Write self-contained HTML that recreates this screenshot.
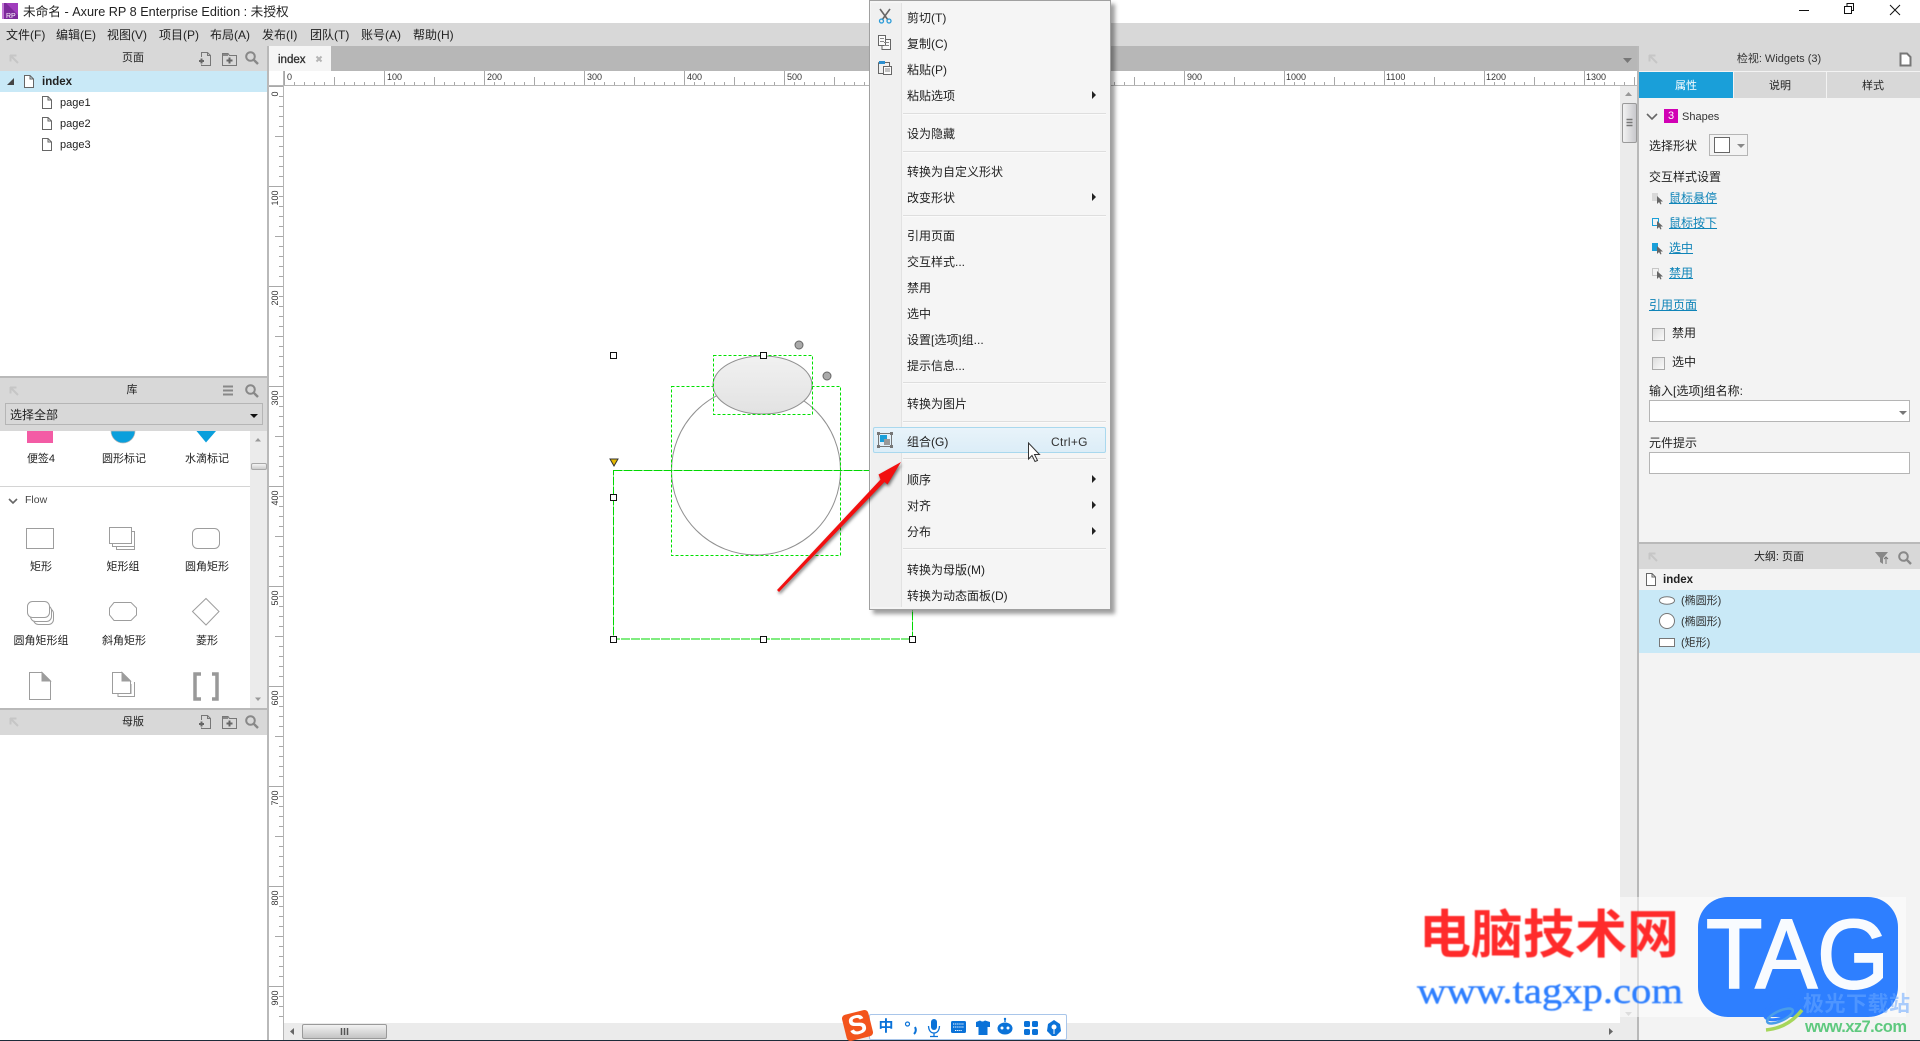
<!DOCTYPE html>
<html lang="zh-CN">
<head>
<meta charset="utf-8">
<title>未命名 - Axure RP 8 Enterprise Edition : 未授权</title>
<style>
html,body{margin:0;padding:0;width:1920px;height:1041px;overflow:hidden;background:#fff}
body{position:relative;font-family:"Liberation Sans","Noto Sans CJK SC",sans-serif;font-size:12px;color:#222}
.b{position:absolute}
.t{position:absolute;white-space:nowrap;line-height:16px;height:16px}
.c{transform:translateX(-50%)}
.m{font-size:11px}
.l{color:#0f84b8;text-decoration:underline}
svg{position:absolute;left:0;top:0;overflow:visible}
.sep{position:absolute;left:33px;width:203px;height:1px;background:#dedede;border-bottom:1px solid #fafafa}
.menu .t{left:37px}
.ar{position:absolute;left:222px;width:0;height:0;border-left:4px solid #222;border-top:4px solid transparent;border-bottom:4px solid transparent}
</style>
</head>
<body>

<!-- base panels -->
<div class="b" style="left:0;top:23px;width:1920px;height:23px;background:#d8d8d8"></div>
<div class="b" style="left:0;top:46px;width:267px;height:25px;background:#d8d8d8"></div>
<div class="b" style="left:0;top:71px;width:267px;height:21px;background:#c9e9f7"></div>
<div class="b" style="left:267px;top:46px;width:2px;height:994px;background:#b9b9b9"></div>
<div class="b" style="left:0;top:376px;width:267px;height:2px;background:#b9b9b9"></div>
<div class="b" style="left:0;top:378px;width:267px;height:53px;background:#d8d8d8"></div>
<div class="b" style="left:5px;top:403px;width:256px;height:20px;border:1px solid #b5b5b5"></div>
<div class="b" style="left:250px;top:431px;width:17px;height:277px;background:#ebebeb"></div>
<div class="b" style="left:0;top:486px;width:250px;height:1px;background:#d4d4d4"></div>
<div class="b" style="left:251px;top:463px;width:14px;height:5px;border:1px solid #a8a8a8;border-radius:2px;background:linear-gradient(#f4f4f4,#ccc)"></div>
<div class="b" style="left:0;top:708px;width:267px;height:2px;background:#b9b9b9"></div>
<div class="b" style="left:0;top:710px;width:267px;height:25px;background:#d8d8d8"></div>

<!-- tab bar -->
<div class="b" style="left:269px;top:46px;width:1369px;height:25px;background:#b7b7b7"></div>
<div class="b" style="left:269px;top:46px;width:62px;height:25px;background:#f5f5f5"></div>

<!-- right panel -->
<div class="b" style="left:1637px;top:46px;width:2px;height:994px;background:#b9b9b9"></div>
<div class="b" style="left:1639px;top:46px;width:281px;height:994px;background:#f3f3f3"></div>
<div class="b" style="left:1639px;top:46px;width:281px;height:25px;background:#d8d8d8"></div>
<div class="b" style="left:1639px;top:72px;width:94px;height:26px;background:#1a9fd9"></div>
<div class="b" style="left:1734px;top:72px;width:92px;height:26px;background:#d8d8d8"></div>
<div class="b" style="left:1827px;top:72px;width:93px;height:26px;background:#d8d8d8"></div>
<div class="b" style="left:1709px;top:134px;width:37px;height:20px;border:1px solid #b5b5b5;background:#f3f3f3"></div>
<div class="b" style="left:1714px;top:137px;width:14px;height:14px;border:1px solid #666;background:#fff"></div>
<div class="b" style="left:1652px;top:328px;width:11px;height:11px;border:1px solid #aaa;background:linear-gradient(135deg,#ddd,#fafafa)"></div>
<div class="b" style="left:1652px;top:357px;width:11px;height:11px;border:1px solid #aaa;background:linear-gradient(135deg,#ddd,#fafafa)"></div>
<div class="b" style="left:1649px;top:400px;width:259px;height:20px;border:1px solid #b5b5b5;background:#fff"></div>
<div class="b" style="left:1649px;top:452px;width:259px;height:20px;border:1px solid #b5b5b5;background:#fff"></div>
<div class="b" style="left:1639px;top:542px;width:281px;height:2px;background:#b9b9b9"></div>
<div class="b" style="left:1639px;top:544px;width:281px;height:25px;background:#d8d8d8"></div>
<div class="b" style="left:1639px;top:590px;width:281px;height:63px;background:#c9e9f7"></div>

<!-- scrollbars -->
<div class="b" style="left:1620px;top:86px;width:17px;height:954px;background:#ebebeb"></div>
<div class="b" style="left:1622px;top:103px;width:13px;height:38px;border:1px solid #9a9a9a;border-radius:2px;background:linear-gradient(90deg,#f2f2f2,#c8c8cc)"></div>
<div class="b" style="left:284px;top:1023px;width:1336px;height:17px;background:#ebebeb"></div>
<div class="b" style="left:302px;top:1024px;width:83px;height:13px;border:1px solid #9a9a9a;border-radius:2px;background:linear-gradient(#f2f2f2,#c4c4c4)"></div>
<div class="b" style="left:0;top:1040px;width:1920px;height:1px;background:#1d2c3a"></div>

<!-- graphics -->
<svg width="1920" height="1041" viewBox="0 0 1920 1041">
<defs>
<pattern id="rt" patternUnits="userSpaceOnUse" x="284" y="71" width="100" height="14">
<g fill="#a8a8a8"><rect x="0" y="0" width="1" height="14"/><rect x="50" y="6" width="1" height="8"/>
<rect x="10" y="11" width="1" height="3"/><rect x="20" y="11" width="1" height="3"/><rect x="30" y="11" width="1" height="3"/><rect x="40" y="11" width="1" height="3"/><rect x="60" y="11" width="1" height="3"/><rect x="70" y="11" width="1" height="3"/><rect x="80" y="11" width="1" height="3"/><rect x="90" y="11" width="1" height="3"/></g>
</pattern>
<pattern id="rl" patternUnits="userSpaceOnUse" x="269" y="86" width="14" height="100">
<g fill="#a8a8a8"><rect x="0" y="0" width="14" height="1"/><rect x="6" y="50" width="8" height="1"/>
<rect x="10" y="10" width="4" height="1"/><rect x="10" y="20" width="4" height="1"/><rect x="10" y="30" width="4" height="1"/><rect x="10" y="40" width="4" height="1"/><rect x="10" y="60" width="4" height="1"/><rect x="10" y="70" width="4" height="1"/><rect x="10" y="80" width="4" height="1"/><rect x="10" y="90" width="4" height="1"/></g>
</pattern>
<linearGradient id="eg" x1="0" y1="0" x2="0" y2="1"><stop offset="0" stop-color="#f1f1f1"/><stop offset="1" stop-color="#e2e2e2"/></linearGradient>
<symbol id="pin" width="10" height="10" viewBox="0 0 10 10"><path d="M1 1.5H7.5M1.5 1V7.5M2 2L9 9" fill="none" stroke="#c6c6c6" stroke-width="2"/></symbol>
<symbol id="np" width="14" height="14" viewBox="0 0 14 14"><path d="M3.5 5V.5H9.5L12.5 3.5V13.5H3.5V12.5M9.5.5V3.5H12.5" fill="none" stroke="#777"/><path d="M3.5 6.5V11.5M1 9H6" stroke="#666" stroke-width="2"/></symbol>
<symbol id="nf" width="15" height="14" viewBox="0 0 15 14"><path d="M.5 1.5H6L7.5 3.5H14.5V13.5H.5Z" fill="none" stroke="#777"/><rect x="1" y="2" width="5" height="2" fill="#888"/><path d="M7.5 5.5V11.5M4.5 8.5H10.5" stroke="#666" stroke-width="2"/></symbol>
<symbol id="sr" width="14" height="14" viewBox="0 0 14 14"><circle cx="5.5" cy="5.5" r="4.3" fill="none" stroke="#888" stroke-width="2"/><path d="M8.8 8.8L13 13" stroke="#888" stroke-width="2.4"/></symbol>
<symbol id="pg" width="10" height="13" viewBox="0 0 10 13"><path d="M.5.5H6L9.5 4V12.5H.5ZM6 .5V4H9.5" fill="#fff" stroke="#666"/></symbol>
<symbol id="cur" width="12" height="12" viewBox="0 0 12 12"><path d="M5 3L5 11L7 9L8.5 11.5L9.5 11L8.5 8.5L11 8.5Z" fill="#666"/></symbol>
</defs>

<!-- rulers -->
<rect x="269" y="71" width="1368" height="14" fill="#fff"/>
<rect x="284" y="71" width="1353" height="14" fill="url(#rt)"/>
<rect x="269" y="85" width="1368" height="1" fill="#b5b5b5"/>
<rect x="269" y="86" width="14" height="937" fill="url(#rl)"/>
<rect x="283" y="71" width="1" height="969" fill="#b5b5b5"/>
<g font-size="9" fill="#333" font-family="Liberation Sans,sans-serif">
<text x="287" y="80">0</text><text x="387" y="80">100</text><text x="487" y="80">200</text><text x="587" y="80">300</text><text x="687" y="80">400</text><text x="787" y="80">500</text><text x="1187" y="80">900</text><text x="1286" y="80">1000</text><text x="1386" y="80">1100</text><text x="1486" y="80">1200</text><text x="1586" y="80">1300</text>
<g text-anchor="middle">
<text transform="translate(278 94) rotate(-90)">0</text>
<text transform="translate(278 198) rotate(-90)">100</text>
<text transform="translate(278 298) rotate(-90)">200</text>
<text transform="translate(278 398) rotate(-90)">300</text>
<text transform="translate(278 498) rotate(-90)">400</text>
<text transform="translate(278 598) rotate(-90)">500</text>
<text transform="translate(278 698) rotate(-90)">600</text>
<text transform="translate(278 798) rotate(-90)">700</text>
<text transform="translate(278 898) rotate(-90)">800</text>
<text transform="translate(278 998) rotate(-90)">900</text>
</g>
</g>

<!-- canvas shapes -->
<circle cx="756" cy="470.5" r="84.5" fill="#fff" stroke="#909090" stroke-width="1"/>
<rect x="613.5" y="470.5" width="299" height="168.5" fill="none" stroke="#00d800" stroke-width="1" stroke-dasharray="9 1"/>
<rect x="671.5" y="386.5" width="169" height="169" fill="none" stroke="#00e000" stroke-width="1" stroke-dasharray="3 2"/>
<ellipse cx="762.5" cy="385" rx="49.5" ry="29" fill="url(#eg)" stroke="#909090" stroke-width="1"/>
<rect x="713.5" y="355.5" width="99" height="59" fill="none" stroke="#00e000" stroke-width="1" stroke-dasharray="3 2"/>
<circle cx="799" cy="345" r="4" fill="#aaa" stroke="#666"/>
<circle cx="827" cy="376" r="4" fill="#aaa" stroke="#666"/>
<path d="M610 459H618L614 466Z" fill="#e5b800" stroke="#333" stroke-width="1"/>
<g fill="#fff" stroke="#111" stroke-width="1">
<rect x="610.5" y="352.5" width="6" height="6"/><rect x="760.5" y="352.5" width="6" height="6"/>
<rect x="610.5" y="494.5" width="6" height="6"/><rect x="610.5" y="636.5" width="6" height="6"/>
<rect x="760.5" y="636.5" width="6" height="6"/><rect x="909.5" y="636.5" width="6" height="6"/>
</g>

<!-- panel icons -->
<use href="#pin" x="9" y="54"/><use href="#np" x="198" y="52"/><use href="#nf" x="222" y="52"/><use href="#sr" x="245" y="51"/>
<use href="#pin" x="9" y="386"/><use href="#sr" x="245" y="384"/>
<path d="M223 386.5H233M223 390.5H233M223 394.5H233" stroke="#888" stroke-width="2"/>
<path d="M250 414H258L254 418Z" fill="#111"/>
<use href="#pin" x="9" y="717"/><use href="#np" x="198" y="715"/><use href="#nf" x="222" y="715"/><use href="#sr" x="245" y="715"/>
<path d="M14 78V85H7Z" fill="#444"/>
<use href="#pg" x="24" y="75"/><use href="#pg" x="42" y="96"/><use href="#pg" x="42" y="117"/><use href="#pg" x="42" y="138"/>
<path d="M316.5 56.5L321.5 61.5M321.5 56.5L316.5 61.5" stroke="#b5b5b5" stroke-width="2"/>
<path d="M1623 58H1632L1627.5 63Z" fill="#777"/>

<!-- scrollbar arrows -->
<path d="M255 441.5L258 438L261 441.5Z" fill="#999"/>
<path d="M255 697.5L258 701L261 697.5Z" fill="#999"/>
<path d="M1625 96L1628.5 92L1632 96Z" fill="#999"/>
<path d="M1625 1012L1628.5 1016L1632 1012Z" fill="#bbb"/>
<path d="M1609 1028V1035L1613 1031.5Z" fill="#666"/>
<path d="M294 1028V1035L290 1031.5Z" fill="#666"/>
<path d="M1626.5 119.5H1632.5M1626.5 122.5H1632.5M1626.5 125.5H1632.5" stroke="#777" stroke-width="1.5"/>
<path d="M341.5 1028V1035M344.5 1028V1035M347.5 1028V1035" stroke="#555" stroke-width="1.5"/>

<!-- library shapes -->
<rect x="27" y="431" width="26" height="12" fill="#f35ca5"/>
<path d="M111 431A12 12 0 0 0 135 431Z" fill="#0a9fdc" stroke="#bbb" stroke-width=".7"/>
<path d="M196.5 431H216L206 442.5Z" fill="#0a9fdc"/>
<path d="M9 499L13 503L17 499" fill="none" stroke="#666" stroke-width="1.6"/>
<g fill="#fff" stroke="#9d9d9d" stroke-width="1">
<rect x="26.5" y="528.5" width="27" height="20"/>
<rect x="116.5" y="534.5" width="18" height="15"/><rect x="112.5" y="531.5" width="22" height="15"/><rect x="109.5" y="527.5" width="22" height="16"/>
<rect x="192.5" y="528.5" width="27" height="20" rx="5"/>
<rect x="33.5" y="608.5" width="20" height="16" rx="5"/><rect x="30.5" y="605.5" width="21" height="16" rx="5"/><rect x="27.5" y="601.5" width="22" height="16" rx="5"/>
<path d="M114 602.5H131L136.5 608V615L131 620.5H114L109.5 615V608Z"/>
<path d="M206 598.5L219 611.5L206 625L192.5 611.5Z"/>
<path d="M29.5 672.5H42L50.5 681V699.5H29.5Z"/><path d="M42 672.5V681H50.5Z" fill="#9d9d9d"/>
<path d="M118 678V696.5H134.5V682" /><path d="M115 680V693.5H131V684"/>
<path d="M112.5 672.5H122L130.5 681V693.5H112.5Z"/><path d="M122 672.5V681H130.5Z" fill="#9d9d9d"/>
</g>
<path d="M201 674H195V699H201M212 674H217V699H212" fill="none" stroke="#999" stroke-width="3.5"/>

<!-- right panel icons -->
<use href="#pin" x="1648" y="54"/>
<path d="M1900.5 53.5H1907L1910.5 57V65.5H1900.5Z" fill="#fff" stroke="#777" stroke-width="2"/>
<path d="M1647 114L1652 119L1657 114" fill="none" stroke="#666" stroke-width="1.6"/>
<rect x="1664" y="109" width="14" height="14" fill="#d100b4"/>
<path d="M1737 144H1745L1741 148Z" fill="#888"/>
<path d="M1899 411H1907L1903 415Z" fill="#777"/>
<rect x="1652" y="193" width="6" height="8" fill="#d8d8d8"/><use href="#cur" x="1652" y="193"/>
<rect x="1652.5" y="218.5" width="6" height="7" fill="none" stroke="#1a9fd9"/><use href="#cur" x="1652" y="218"/>
<rect x="1652" y="243" width="6" height="8" fill="#1a9fd9"/><use href="#cur" x="1652" y="243"/>
<rect x="1652.5" y="268.5" width="6" height="7" fill="none" stroke="#999" stroke-dasharray="1 1"/><use href="#cur" x="1652" y="268"/>
<use href="#pin" x="1648" y="552"/>
<path d="M1875 552H1888L1883 558V564L1880 562V558Z" fill="#888"/>
<path d="M1886 564V557M1884 559L1886 557L1888 559" fill="none" stroke="#777"/>
<use href="#sr" x="1898" y="551"/>
<use href="#pg" x="1646" y="573"/>
<ellipse cx="1667" cy="600.5" rx="7.5" ry="3.8" fill="#fff" stroke="#777"/>
<circle cx="1667" cy="621" r="7.5" fill="#fff" stroke="#777"/>
<rect x="1659.5" y="638.5" width="15" height="8" fill="#fff" stroke="#777"/>

<!-- window controls -->
<path d="M1799 10.5H1809" stroke="#111"/>
<path d="M1844.5 6.5H1851.5V13.5H1844.5ZM1847 6V3.5H1853.5V10.5H1852" fill="none" stroke="#111"/>
<path d="M1890 5L1900 15M1900 5L1890 15" stroke="#111"/>

<!-- logo -->
<rect x="2" y="3" width="16" height="16" fill="#7d2a9b"/>
<path d="M6 3H18V15Z" fill="#a13dbd"/>
<rect x="2" y="3" width="2" height="16" fill="#c27ad6"/>
<text x="6" y="18" font-size="7" font-family="Liberation Sans,sans-serif" fill="#fff">RP</text>
</svg>

<!-- text base -->
<div class="t" style="left:23px;top:4px;font-size:12.67px">未命名 - Axure RP 8 Enterprise Edition : 未授权</div>
<div class="t" style="left:6px;top:27px">文件(F)</div>
<div class="t" style="left:56px;top:27px">编辑(E)</div>
<div class="t" style="left:107px;top:27px">视图(V)</div>
<div class="t" style="left:159px;top:27px">项目(P)</div>
<div class="t" style="left:210px;top:27px">布局(A)</div>
<div class="t" style="left:262px;top:27px">发布(I)</div>
<div class="t" style="left:310px;top:27px">团队(T)</div>
<div class="t" style="left:361px;top:27px">账号(A)</div>
<div class="t" style="left:413px;top:27px">帮助(H)</div>

<div class="t m c" style="left:133px;top:50px">页面</div>
<div class="t" style="left:42px;top:74px;font-weight:bold;font-size:11.5px">index</div>
<div class="t m" style="left:60px;top:95px">page1</div>
<div class="t m" style="left:60px;top:116px">page2</div>
<div class="t m" style="left:60px;top:137px">page3</div>
<div class="t" style="left:278px;top:52px;font-size:11.5px;-webkit-text-stroke:.35px #333;color:#333">index</div>

<div class="t m c" style="left:132px;top:382px">库</div>
<div class="t" style="left:10px;top:407px">选择全部</div>
<div class="t m c" style="left:41px;top:451px">便签4</div>
<div class="t m c" style="left:124px;top:451px">圆形标记</div>
<div class="t m c" style="left:207px;top:451px">水滴标记</div>
<div class="t m" style="left:25px;top:492px;font-size:10.5px;color:#444">Flow</div>
<div class="t m c" style="left:41px;top:559px">矩形</div>
<div class="t m c" style="left:123px;top:559px">矩形组</div>
<div class="t m c" style="left:207px;top:559px">圆角矩形</div>
<div class="t m c" style="left:41px;top:633px">圆角矩形组</div>
<div class="t m c" style="left:124px;top:633px">斜角矩形</div>
<div class="t m c" style="left:207px;top:633px">菱形</div>
<div class="t m c" style="left:133px;top:714px">母版</div>

<div class="t c" style="left:1779px;top:51px;color:#333;font-size:11px">检视: Widgets (3)</div>
<div class="t m c" style="left:1686px;top:78px;color:#fff">属性</div>
<div class="t m c" style="left:1780px;top:78px">说明</div>
<div class="t m c" style="left:1873px;top:78px">样式</div>
<div class="t c" style="left:1671px;top:108px;color:#fff;font-size:11px">3</div>
<div class="t m" style="left:1682px;top:109px;color:#333">Shapes</div>
<div class="t" style="left:1649px;top:138px">选择形状</div>
<div class="t" style="left:1649px;top:169px">交互样式设置</div>
<div class="t l" style="left:1669px;top:190px">鼠标悬停</div>
<div class="t l" style="left:1669px;top:215px">鼠标按下</div>
<div class="t l" style="left:1669px;top:240px">选中</div>
<div class="t l" style="left:1669px;top:265px">禁用</div>
<div class="t l" style="left:1649px;top:297px">引用页面</div>
<div class="t" style="left:1672px;top:325px">禁用</div>
<div class="t" style="left:1672px;top:354px">选中</div>
<div class="t" style="left:1649px;top:383px">输入[选项]组名称:</div>
<div class="t" style="left:1649px;top:435px">元件提示</div>
<div class="t m c" style="left:1779px;top:549px">大纲: 页面</div>
<div class="t" style="left:1663px;top:572px;font-weight:bold;font-size:11.5px">index</div>
<div class="t m" style="left:1681px;top:593px;color:#333">(椭圆形)</div>
<div class="t m" style="left:1681px;top:614px;color:#333">(椭圆形)</div>
<div class="t m" style="left:1681px;top:635px;color:#333">(矩形)</div>

<!-- context menu -->
<div class="menu b" style="left:869px;top:0;width:240px;height:608px;background:#f5f5f5;border:1px solid #a0a0a0;box-shadow:4px 4px 4px rgba(0,0,0,.38)">
  <div class="b" style="left:1px;top:2px;width:30px;height:604px;background:#f0f0f0;border-right:1px solid #e2e2e2"></div>
  <div class="t" style="top:9px">剪切(T)</div>
  <div class="t" style="top:35px">复制(C)</div>
  <div class="t" style="top:61px">粘贴(P)</div>
  <div class="t" style="top:87px">粘贴选项</div><div class="ar" style="top:90px"></div>
  <div class="sep" style="top:112px"></div>
  <div class="t" style="top:125px">设为隐藏</div>
  <div class="sep" style="top:150px"></div>
  <div class="t" style="top:163px">转换为自定义形状</div>
  <div class="t" style="top:189px">改变形状</div><div class="ar" style="top:192px"></div>
  <div class="sep" style="top:214px"></div>
  <div class="t" style="top:227px">引用页面</div>
  <div class="t" style="top:253px">交互样式...</div>
  <div class="t" style="top:279px">禁用</div>
  <div class="t" style="top:305px">选中</div>
  <div class="t" style="top:331px">设置[选项]组...</div>
  <div class="t" style="top:357px">提示信息...</div>
  <div class="sep" style="top:381px"></div>
  <div class="t" style="top:395px">转换为图片</div>
  <div class="sep" style="top:420px"></div>
  <div class="b" style="left:3px;top:426px;width:231px;height:24px;border:1px solid #a9d8ee;border-radius:2px;background:linear-gradient(#e8f3fa,#dcedf7)"></div>
  <div class="t" style="top:433px">组合(G)</div>
  <div class="t" style="left:181px;top:433px;color:#333;letter-spacing:.3px">Ctrl+G</div>
  <div class="sep" style="top:457px"></div>
  <div class="t" style="top:471px">顺序</div><div class="ar" style="top:474px"></div>
  <div class="t" style="top:497px">对齐</div><div class="ar" style="top:500px"></div>
  <div class="t" style="top:523px">分布</div><div class="ar" style="top:526px"></div>
  <div class="sep" style="top:547px"></div>
  <div class="t" style="top:561px">转换为母版(M)</div>
  <div class="t" style="top:587px">转换为动态面板(D)</div>
</div>

<!-- menu icons, arrow, cursor -->
<svg width="1920" height="1041" viewBox="0 0 1920 1041">
<path d="M880 9L888 20M890 9L882 20" stroke="#666" stroke-width="1.6"/>
<circle cx="881.5" cy="21" r="2" fill="none" stroke="#2a9bd8" stroke-width="1.3"/><circle cx="889" cy="21" r="2" fill="none" stroke="#2a9bd8" stroke-width="1.3"/>
<path d="M878.5 35.5H885.5V45.5H878.5ZM885.5 39.5H890.5V49.5H882V45.5" fill="#fbfbfb" stroke="#666"/>
<path d="M880 38.5H884M880 41.5H884M884 42.5H889M884 45.5H889" stroke="#888"/>
<path d="M878.5 62.5H889.5V66M878.5 62.5V73.5H883" fill="none" stroke="#666"/>
<rect x="879" y="61" width="6" height="3" fill="#2a8fd0"/>
<path d="M883.5 66.5H891.5V74.5H883.5Z" fill="#fbfbfb" stroke="#666"/><path d="M885 69H890M885 71H890" stroke="#888"/>
<rect x="878.5" y="433.5" width="13" height="13" fill="none" stroke="#777"/>
<rect x="880" y="435" width="7" height="7" fill="#1a9fd9"/><rect x="884" y="439" width="6" height="6" fill="#999"/>
<g fill="#777"><rect x="877" y="432" width="3" height="3"/><rect x="890" y="432" width="3" height="3"/><rect x="877" y="445" width="3" height="3"/><rect x="890" y="445" width="3" height="3"/></g>
<path d="M1028.5 443V459L1032 455.5L1035 461.5L1037.5 460.5L1034.5 454.5L1039.5 454.5Z" fill="#fff" stroke="#333" stroke-width="1"/>
<g style="filter:drop-shadow(1px 2px 1.5px rgba(0,0,0,.55))">
<path d="M777 590L880.5 479.5L878.5 474.5L901 462L887.5 484.5L884.5 482L779 592Z" fill="#f21010"/>
</g>
</svg>

<!-- watermark -->
<div class="b" style="left:1620px;top:897px;width:286px;height:120px;background:rgba(255,255,255,.5)"></div>
<svg width="1920" height="1041" viewBox="0 0 1920 1041">
<rect x="1698" y="897" width="200" height="120" rx="30" fill="#2e7fff"/>
<text x="1706" y="988" font-size="98" font-family="Liberation Sans,sans-serif" fill="#f8fbff" textLength="183" lengthAdjust="spacingAndGlyphs" stroke="#f8fbff" stroke-width="2">TAG</text>
<text x="1419" y="953" font-size="52" font-family="Noto Sans CJK SC,sans-serif" font-weight="700" fill="#ff2b2b" textLength="260" style="filter:blur(.4px)">电脑技术网</text>
<text x="1417" y="1003" font-size="36" font-family="Liberation Serif,serif" fill="#2e7fff" stroke="#2e7fff" stroke-width=".4" textLength="266" lengthAdjust="spacingAndGlyphs" style="filter:blur(.4px)">www.tagxp.com</text>
<g fill="none">
<ellipse cx="1783" cy="1008" rx="20" ry="9" transform="rotate(-25 1783 1008)" stroke="#2e7fff" stroke-width="3"/>
<ellipse cx="1780" cy="1016" rx="14" ry="5" transform="rotate(-25 1780 1016)" stroke="#4a9de8" stroke-width="2.5"/>
<path d="M1766 1030Q1788 1028 1802 1010" stroke="#a6d65a" stroke-width="3.5"/>
</g>
<text x="1803" y="1011" font-size="21" font-family="Noto Sans CJK SC,sans-serif" font-weight="bold" fill="#6aa8ff" fill-opacity=".55" textLength="107">极光下载站</text>
<text x="1805" y="1032" font-size="16.5" font-family="Liberation Sans,sans-serif" font-weight="bold" fill="#5fc97f" textLength="102">www.xz7.com</text>
</svg>

<!-- sogou bar -->
<div class="b" style="left:869px;top:1014px;width:196px;height:24px;background:#fff;border:1px solid #a9c6ea;border-radius:2px"></div>
<div class="b" style="left:844px;top:1012px;width:27px;height:27px;background:#f3541c;border-radius:4px;transform:rotate(-14deg);color:#fff;font:bold 27px/26px 'Liberation Sans',sans-serif;text-align:center">S</div>
<div class="t c" style="left:886px;top:1018px;font-size:15px;font-weight:bold;color:#0a72d8;line-height:18px;height:18px">中</div>
<svg width="1920" height="1041" viewBox="0 0 1920 1041" fill="#0a72d8">
<circle cx="907.5" cy="1024" r="2" fill="none" stroke="#0a72d8" stroke-width="1.2"/>
<path d="M915 1027Q917 1031 914 1034" fill="none" stroke="#0a72d8" stroke-width="2"/>
<rect x="931" y="1019" width="6" height="11" rx="3"/><path d="M928.5 1026Q929 1033 934 1033Q939 1033 939.5 1026M934 1033V1036M930 1036.5H938" fill="none" stroke="#0a72d8" stroke-width="1.3"/>
<rect x="951" y="1021" width="15" height="12" rx="1.5"/><path d="M953 1024H964M953 1027H964M955 1030.5H962" stroke="#fff" stroke-dasharray="1.3 .8"/>
<path d="M976 1022L980 1020.5Q982.5 1022.5 985 1020.5L990 1022L990 1027L987.5 1027V1035H978.5V1027L976 1027Z"/>
<ellipse cx="1005" cy="1028.5" rx="7.5" ry="6"/><path d="M1005 1022V1019" stroke="#0a72d8" stroke-width="1.4"/><circle cx="1005" cy="1019" r="1.2"/><circle cx="1002" cy="1028" r="1.5" fill="#fff"/><circle cx="1008" cy="1028" r="1.5" fill="#fff"/>
<rect x="1024" y="1021" width="6" height="6" rx="1.5"/><rect x="1032" y="1021" width="6" height="6" rx="1.5"/><rect x="1024" y="1029" width="6" height="6" rx="1.5"/><rect x="1032" y="1029" width="6" height="6" rx="1.5"/>
<path d="M1054 1020L1060 1024L1061 1031L1056 1036H1052L1047 1031L1048 1024Z"/><circle cx="1054" cy="1027" r="2.5" fill="#fff"/><path d="M1054 1029V1034" stroke="#fff"/>
</svg>
</body>
</html>
